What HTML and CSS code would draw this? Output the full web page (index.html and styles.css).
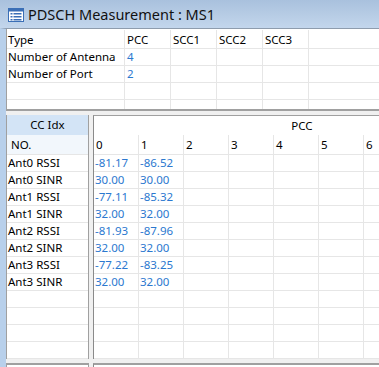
FILE: index.html
```html
<!DOCTYPE html>
<html lang="en">
<head>
  <meta charset="UTF-8" />
  <title>PDSCH Measurement</title>
  <link rel="stylesheet" href="styles.css">
</head>
<body>

  <div class="titlebar">
    <svg class="icon" width="16" height="14" viewBox="0 0 16 14">
      <rect x="0.5" y="0.5" width="15" height="13" fill="#fff" stroke="#3b6fb6"/>
      <rect x="1" y="1" width="14" height="2.5" fill="#3b6fb6"/>
      <rect x="2.5" y="5" width="2" height="1.5" fill="#3b6fb6"/>
      <rect x="5.5" y="5" width="8" height="1.5" fill="#3b6fb6"/>
      <rect x="2.5" y="8" width="2" height="1.5" fill="#3b6fb6"/>
      <rect x="5.5" y="8" width="8" height="1.5" fill="#3b6fb6"/>
      <rect x="2.5" y="11" width="2" height="1.5" fill="#3b6fb6"/>
      <rect x="5.5" y="11" width="8" height="1.5" fill="#3b6fb6"/>
    </svg>
    <span>PDSCH Measurement : MS1</span>
  </div>

  <div class="frame">
    <!-- summary table -->
    <div class="info">
      <div class="info-row head">
        <div class="c type">Type</div><div class="c">PCC</div><div class="c">SCC1</div><div class="c">SCC2</div><div class="c">SCC3</div><div class="c rest"></div>
      </div>
      <div class="info-row">
        <div class="c type">Number of Antenna</div><div class="c val">4</div><div class="c"></div><div class="c"></div><div class="c"></div><div class="c rest"></div>
      </div>
      <div class="info-row">
        <div class="c type">Number of Port</div><div class="c val">2</div><div class="c"></div><div class="c"></div><div class="c"></div><div class="c rest"></div>
      </div>
      <div class="info-row">
        <div class="c type"></div><div class="c"></div><div class="c"></div><div class="c"></div><div class="c"></div><div class="c rest"></div>
      </div>
      <div class="info-row">
        <div class="c type"></div><div class="c"></div><div class="c"></div><div class="c"></div><div class="c"></div><div class="c rest"></div>
      </div>
    </div>

    <div class="lower">
      <div class="panel left" id="leftPanel">
        <div class="cc-head">CC Idx</div>
        <div class="no-row">NO.</div>
      </div>
      <div class="panel right" id="rightPanel">
        <div class="pcc-head">PCC</div>
        <div class="grid-row nums" id="numRow"></div>
      </div>
    </div>

    <div class="lower bottom">
      <div class="panel left"></div>
      <div class="panel right"></div>
    </div>
  </div>

  <script>
    const rows = [
      ["Ant0 RSSI", "-81.17", "-86.52"],
      ["Ant0 SINR", "30.00", "30.00"],
      ["Ant1 RSSI", "-77.11", "-85.32"],
      ["Ant1 SINR", "32.00", "32.00"],
      ["Ant2 RSSI", "-81.93", "-87.96"],
      ["Ant2 SINR", "32.00", "32.00"],
      ["Ant3 RSSI", "-77.22", "-83.25"],
      ["Ant3 SINR", "32.00", "32.00"],
      ["", "", ""], ["", "", ""], ["", "", ""], ["", "", ""]
    ];
    const cols = 7;
    const left = document.getElementById("leftPanel");
    const right = document.getElementById("rightPanel");
    const numRow = document.getElementById("numRow");

    for (let i = 0; i < cols; i++) {
      const d = document.createElement("div");
      d.className = "g";
      d.textContent = i;
      numRow.appendChild(d);
    }

    rows.forEach(function (r) {
      const l = document.createElement("div");
      l.className = "lbl";
      l.textContent = r[0];
      left.appendChild(l);

      const row = document.createElement("div");
      row.className = "grid-row";
      for (let i = 0; i < cols; i++) {
        const d = document.createElement("div");
        d.className = "g val";
        d.textContent = r[i + 1] || "";
        row.appendChild(d);
      }
      right.appendChild(row);
    });
  </script>

</body>
</html>
```

FILE: styles.css
```css
* {
  box-sizing: border-box;
}

body {
  margin: 0;
  width: 379px;
  height: 367px;
  overflow: hidden;
  font-family: "Noto Sans", "Liberation Sans", sans-serif;
  font-size: 11.5px;
  color: #000;
  background: #f0f0f0;
}

.titlebar {
  height: 28px;
  display: flex;
  align-items: center;
  gap: 4px;
  padding-left: 8px;
  background: linear-gradient(#a9c1dd, #c3d6ec);
  font-size: 14.5px;
  color: #111;
}

.icon {
  margin-top: 1px;
}

.frame {
  border-left: 6px solid #b8d0eb;
  border-top: 1px solid #8e9cad;
}

.info {
  height: 82px;
  overflow: hidden;
  background: #fff;
  border-left: 1px solid #a0a0a0;
  border-bottom: 2px solid #a0a0a0;
}

.info-row {
  display: flex;
  height: 17px;
  border-bottom: 1px solid #e6e6e6;
  line-height: 16px;
}

.info-row.head {
  height: 20px;
  line-height: 19px;
  padding-top: 1px;
}

.c {
  width: 46px;
  flex: none;
  padding-left: 2px;
  border-right: 1px solid #e6e6e6;
  white-space: nowrap;
  overflow: hidden;
}

.c.type {
  width: 118px;
  padding-left: 1px;
}

.c.rest {
  flex: 1;
  border-right: none;
}

.val {
  color: #2b78cf;
}

.lower {
  display: flex;
  gap: 4px;
  height: 244px;
  margin-top: 4px;
}

.lower.bottom {
  height: 20px;
}

.panel {
  background: #fff;
  overflow: hidden;
}

.panel.left {
  width: 83px;
  flex: none;
  border-left: 1px solid #a0a0a0;
  border-right: 1px solid #a0a0a0;
}

.panel.right {
  flex: 1;
  border-left: 1px solid #8a8a8a;
  border-top: 1px solid #a0a0a0;
}

.lower.bottom .panel {
  border-top: 2px solid #a0a0a0;
}

.cc-head {
  height: 20px;
  line-height: 20px;
  text-align: center;
  background: #d3e4f6;
}

.no-row {
  height: 20px;
  line-height: 19px;
  padding-left: 4px;
  background: #f2f7fc;
  border-bottom: 1px solid #e6e6e6;
}

.lbl {
  height: 17px;
  line-height: 16px;
  padding-left: 1px;
  border-bottom: 1px solid #e6e6e6;
  white-space: nowrap;
}

.pcc-head {
  width: 416px;
  height: 19px;
  line-height: 19px;
  text-align: center;
}

.grid-row {
  display: flex;
  height: 17px;
  line-height: 16px;
  border-bottom: 1px solid #e6e6e6;
}

.grid-row.nums {
  height: 20px;
  line-height: 19px;
}

.g {
  width: 45px;
  flex: none;
  padding-left: 1px;
  border-right: 1px solid #e6e6e6;
  white-space: nowrap;
}

.grid-row.nums .g {
  padding-left: 2px;
}
```
